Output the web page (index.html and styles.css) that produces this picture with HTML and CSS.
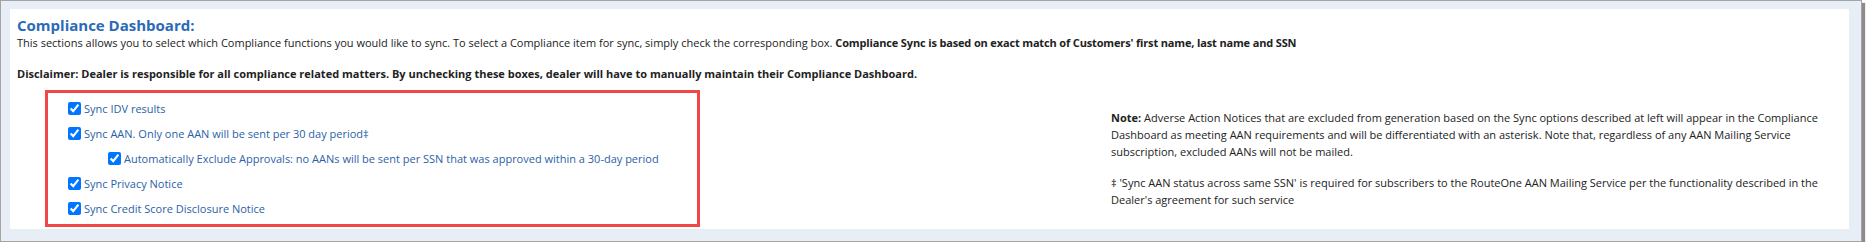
FILE: index.html
```html
<!DOCTYPE html>
<html>
  <head>
    <title>Compliance Dashboard</title>
    <meta charset="UTF-8"/>
    <link rel="stylesheet" href="styles.css">
  </head>
  <body>
    <div class="frame">
      <div class="panel">
        <h2>Compliance Dashboard:</h2>
        <p class="intro">This sections allows you to select which Compliance functions you would like to sync. To select a Compliance item for sync, simply check the corresponding box. <strong>Compliance Sync is based on exact match of Customers' first name, last name and SSN</strong></p>
        <p class="disclaimer"><strong>Disclaimer: Dealer is responsible for all compliance related matters. By unchecking these boxes, dealer will have to manually maintain their Compliance Dashboard.</strong></p>
        <div class="cols">
          <div class="options">
            <label class="opt"><input type="checkbox" checked> Sync IDV results</label>
            <label class="opt"><input type="checkbox" checked> Sync AAN. Only one AAN will be sent per 30 day period&Dagger;</label>
            <label class="opt sub"><input type="checkbox" checked> Automatically Exclude Approvals: no AANs will be sent per SSN that was approved within a 30-day period</label>
            <label class="opt"><input type="checkbox" checked> Sync Privacy Notice</label>
            <label class="opt"><input type="checkbox" checked> Sync Credit Score Disclosure Notice</label>
          </div>
          <div class="notes">
            <p><strong>Note:</strong> Adverse Action Notices that are excluded from generation based on the Sync options described at left will appear in the Compliance Dashboard as meeting AAN requirements and will be differentiated with an asterisk. Note that, regardless of any AAN Mailing Service subscription, excluded AANs will not be mailed.</p>
            <p>&Dagger; 'Sync AAN status across same SSN' is required for subscribers to the RouteOne AAN Mailing Service per the functionality described in the Dealer's agreement for such service</p>
          </div>
        </div>
      </div>
    </div>
  </body>
</html>
```

FILE: styles.css
```css
body {
  margin: 0;
  background: white;
  font-family: 'Open Sans', sans-serif;
  font-size: 11px;
  color: #222;
}
.frame {
  width: 1839px;
  height: 220px;
  border: 1px solid #a4a4a4;
  background: #e8eef6;
  padding: 8px 12px 12px 9px;
  box-shadow: 3px 3px 1px #8c8c8c;
}
.panel {
  height: 100%;
  background: white;
  padding: 0 0 0 7px;
  box-sizing: border-box;
  overflow: hidden;
}
h2 {
  margin: 0;
  padding-top: 6px;
  font-size: 15px;
  line-height: 20px;
  color: #2a6ab8;
}
p {
  margin: 0;
  line-height: 16px;
}
.intro strong {
  letter-spacing: -0.15px;
}
.disclaimer {
  margin-top: 15px;
}
.cols {
  display: flex;
  align-items: flex-start;
  margin-top: 8px;
}
.options {
  width: 632px;
  flex: none;
  margin-left: 28px;
  border: 3px solid #f04848;
  padding: 3px 0 3px 17px;
  display: flex;
  flex-direction: column;
}
.opt {
  display: flex;
  align-items: center;
  height: 25px;
  color: #2b5fa8;
}
.opt input {
  margin: 0 3px;
}
.opt.sub {
  height: 24px;
  margin-bottom: 1px;
  padding-left: 40px;
}
.notes {
  width: 710px;
  margin-left: 411px;
  padding-top: 19px;
}
.notes p {
  line-height: 17px;
  margin-bottom: 14px;
}
```
